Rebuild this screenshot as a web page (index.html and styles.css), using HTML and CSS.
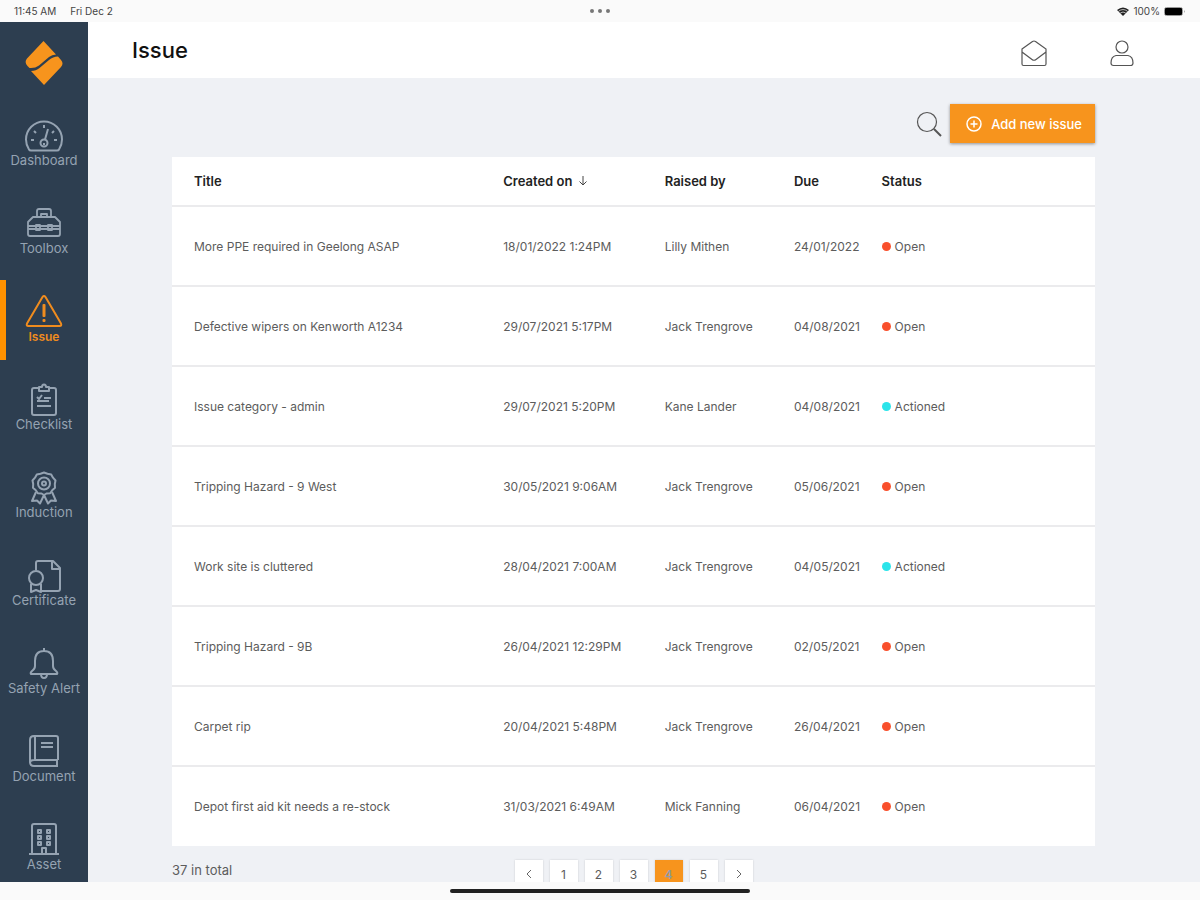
FILE: index.html
```html
<!DOCTYPE html>
<html lang="en">
<head>
  <meta charset="UTF-8" />
  <meta name="viewport" content="width=device-width, initial-scale=1.0"/>
  <title>Issue</title>
  <link rel="stylesheet" href="styles.css">
</head>
<body>

<div class="status-bar">
  <div class="status-left">
    <span>11:45 AM</span>
    <span>Fri Dec 2</span>
  </div>
  <div class="status-dots"><i></i><i></i><i></i></div>
  <div class="status-right">
    <svg width="12" height="9" viewBox="0 0 12 9"><path d="M6 9L0 3Q6-2 12 3Z" fill="#222"/><path d="M1.5 4.3Q6 .8 10.500 4.300M3.300 6Q6 4 8.700 6" fill="none" stroke="#fafafa" stroke-width=".7"/></svg>
    <span>100%</span>
    <svg width="22" height="9" viewBox="0 0 22 9"><rect x=".5" y=".5" width="18" height="8" rx="2" fill="none" stroke="#999"/><rect x="1" y="1" width="17" height="7" rx="1" fill="#000"/><path d="M20 3v3q1.500-1.500 0-3z" fill="#888"/></svg>
  </div>
</div>

<div class="app">
  <aside class="sidebar">
    <a class="logo" href="#" aria-label="Home">
      <svg width="38" height="44" viewBox="0 0 38 44" fill="#f7941d">
        <path d="M18.500 0L31 13.500Q27 13.500 24 16L14 24.500Q10 27.500 4.500 27L2.500 25Q-1 21.500 2 17.500Z"/>
        <path d="M33 15.500L36 19Q39 22.500 36 26L19 44L6 30Q11 30 14.500 27L24 19Q28 15.500 33 15.500Z"/>
      </svg>
    </a>
    <nav>
      <ul class="menu">
        <li><a href="#">
          <svg viewBox="0 0 40 34"><path d="M5 30.500Q2 26 2 20.500a18 18 0 0 1 36 0Q38 26 35 30.500Q34.500 31.500 33 31.500H7Q5.500 31.500 5 30.500Z"/><circle cx="20" cy="24" r="3.500"/><path d="M21 20.500L24 10M20 6v3M7 21h3M30 21h3M10 12l2 2M30 12l-2 2M20 24v2"/></svg>
          <span>Dashboard</span>
        </a></li>
        <li><a href="#">
          <svg viewBox="0 0 40 34"><path d="M13 10V4q0-2 2-2h10q2 0 2 2v6M17 10V7h6v3M9 10h22l5 5v12q0 2-2 2H6q-2 0-2-2V15ZM4 19h32M4 22h32M12 18h4v5h-4zM24 18h4v5h-4z" stroke-width="1.800"/></svg>
          <span>Toolbox</span>
        </a></li>
        <li class="active"><a href="#">
          <svg viewBox="0 0 40 34"><path d="M18.500 2Q20 0 21.500 2L37 28.500Q38 31 35.500 31h-31Q2 31 3 28.500Z"/><path d="M19.500 10h1v11h-1zM19.500 25h1v1h-1z"/></svg>
          <span>Issue</span>
        </a></li>
        <li><a href="#">
          <svg viewBox="0 0 40 34"><path d="M15 5H10q-2 0-2 2v23q0 2 2 2h20q2 0 2-2V7q0-2-2-2h-5"/><path d="M15 8V4h3q0-2.500 2-2.500T22 4h3v4zM13 14l2 2 3-4M20 15h7M13 18h12M13 23h14"/></svg>
          <span>Checklist</span>
        </a></li>
        <li><a href="#">
          <svg viewBox="0 0 40 34"><path d="M20 1.500l3.500 1.200 3.700.8 1.800 3.200 2.500 2.800-.7 3.500.2 3.700-2.800 2.500-2 3-3.700.3-2.500 1.500-2.500-1.500-3.700-.3-2-3-2.800-2.500.2-3.700-.7-3.500 2.500-2.800 1.800-3.200 3.700-.8z"/><circle cx="20" cy="12.500" r="6"/><circle cx="20" cy="12.500" r="2"/><path d="M12 21L8 30l5-.5 3 3 4-8.500 4 8.500 3-3 5 .5-4-9"/></svg>
          <span>Induction</span>
        </a></li>
        <li><a href="#">
          <svg viewBox="0 0 40 34"><path d="M12 11V4q0-2 2-2h15l7 7v21q0 2-2 2H17M28 2v8h8"/><circle cx="12" cy="19" r="7"/><path d="M7 25v8l5-2 5 2v-8"/></svg>
          <span>Certificate</span>
        </a></li>
        <li><a href="#">
          <svg viewBox="0 0 40 34"><path d="M20 1v3M20 4q-9 0-9 10v5q0 3-3 5-2 2-1 3h26q1-1-1-3-3-2-3-5v-5q0-10-9-10ZM17 27q0 4 3 4t3-4"/></svg>
          <span>Safety Alert</span>
        </a></li>
        <li><a href="#">
          <svg viewBox="0 0 40 34"><path d="M34 25V3q0-2-2-2H10Q6 1 6 5v22q0 4 4 4h24M34 25H10q-4 0-4 3M33 25v6M11 1v24M17 8h12M17 12h12"/></svg>
          <span>Document</span>
        </a></li>
        <li><a href="#">
          <svg viewBox="0 0 40 34"><path d="M5 31h30M8 31V3q0-2 2-2h20q2 0 2 2v28"/><path d="M14 7h3v3h-3zM23 7h3v3h-3zM14 13h3v3h-3zM23 13h3v3h-3zM14 19h3v3h-3zM23 19h3v3h-3zM18 31v-6h4v6"/></svg>
          <span>Asset</span>
        </a></li>
      </ul>
    </nav>
  </aside>

  <div class="page">
    <header class="topbar">
      <h1>Issue</h1>
      <div class="topbar-icons">
        <button class="icon-btn" aria-label="Messages">
          <svg width="28" height="28" viewBox="0 0 28 28"><path d="M2 10L12.500 2.500Q14 1.500 15.500 2.500L26 10v15q0 1.500-1.500 1.500h-21Q2 26.500 2 25ZM2 13l10 7.500q2 1.500 4 0L26 13"/></svg>
        </button>
        <button class="icon-btn" aria-label="Profile">
          <svg width="28" height="28" viewBox="0 0 28 28"><circle cx="14" cy="8" r="6"/><path d="M8 16.500h12q5 1 5 7.500 0 2.500-2.500 2.500h-17Q3 26.500 3 24q0-6.500 5-7.500Z"/></svg>
        </button>
      </div>
    </header>

    <main class="content">
      <div class="toolbar">
        <button class="icon-btn" aria-label="Search">
          <svg width="26" height="26" viewBox="0 0 26 26"><circle cx="11" cy="11" r="9.500"/><path d="M18 18l7 7" stroke-width="2"/></svg>
        </button>
        <button class="add-btn">
          <svg width="16" height="16" viewBox="0 0 16 16"><circle cx="8" cy="8" r="7"/><path d="M8 4.500v7M4.500 8h7"/></svg>
          Add new issue
        </button>
      </div>

      <table class="issues">
        <thead>
          <tr>
            <th class="col-title">Title</th>
            <th class="col-created">Created on <svg width="10" height="10" viewBox="0 0 10 10"><path d="M5 0v9M1.500 5.500L5 9l3.500-3.500"/></svg></th>
            <th class="col-raised">Raised by</th>
            <th class="col-due">Due</th>
            <th>Status</th>
          </tr>
        </thead>
        <tbody>
          <tr><td>More PPE required in Geelong ASAP</td><td>18/01/2022 1:24PM</td><td>Lilly Mithen</td><td>24/01/2022</td><td><span class="status open">Open</span></td></tr>
          <tr><td>Defective wipers on Kenworth A1234</td><td>29/07/2021 5:17PM</td><td>Jack Trengrove</td><td>04/08/2021</td><td><span class="status open">Open</span></td></tr>
          <tr><td>Issue category - admin</td><td>29/07/2021 5:20PM</td><td>Kane Lander</td><td>04/08/2021</td><td><span class="status actioned">Actioned</span></td></tr>
          <tr><td>Tripping Hazard - 9 West</td><td>30/05/2021 9:06AM</td><td>Jack Trengrove</td><td>05/06/2021</td><td><span class="status open">Open</span></td></tr>
          <tr><td>Work site is cluttered</td><td>28/04/2021 7:00AM</td><td>Jack Trengrove</td><td>04/05/2021</td><td><span class="status actioned">Actioned</span></td></tr>
          <tr><td>Tripping Hazard - 9B</td><td>26/04/2021 12:29PM</td><td>Jack Trengrove</td><td>02/05/2021</td><td><span class="status open">Open</span></td></tr>
          <tr><td>Carpet rip</td><td>20/04/2021 5:48PM</td><td>Jack Trengrove</td><td>26/04/2021</td><td><span class="status open">Open</span></td></tr>
          <tr><td>Depot first aid kit needs a re-stock</td><td>31/03/2021 6:49AM</td><td>Mick Fanning</td><td>06/04/2021</td><td><span class="status open">Open</span></td></tr>
        </tbody>
      </table>

      <div class="table-footer">
        <span class="total">37 in total</span>
        <nav class="pagination" aria-label="Pages">
          <a href="#" aria-label="Previous"><svg width="8" height="10" viewBox="0 0 8 10"><path d="M6 1L2 5l4 4"/></svg></a>
          <a href="#">1</a>
          <a href="#">2</a>
          <a href="#">3</a>
          <a href="#" class="current">4</a>
          <a href="#">5</a>
          <a href="#" aria-label="Next"><svg width="8" height="10" viewBox="0 0 8 10"><path d="M2 1l4 4-4 4"/></svg></a>
        </nav>
      </div>
    </main>
  </div>
</div>

<footer class="home-bar"><div class="home-indicator"></div></footer>

</body>
</html>
```
FILE: styles.css
```css
* {
  box-sizing: border-box;
}

body {
  display: flex;
  flex-direction: column;
  height: 100vh;
  margin: 0;
  overflow: hidden;
  font-family: Inter, "Open Sans", sans-serif;
  font-size: 12px;
  color: #5c5c5c;
  background: #fafafa;
}

a {
  color: inherit;
  text-decoration: none;
}

button {
  border: 0;
  padding: 0;
  background: none;
  font: inherit;
  cursor: pointer;
}

svg {
  display: block;
}

/* device status bar */
.status-bar {
  display: grid;
  grid-template-columns: 1fr auto 1fr;
  align-items: center;
  flex: none;
  height: 22px;
  padding: 0 14px;
  font-size: 10px;
  color: #444;
}

.status-left {
  display: flex;
  gap: 14px;
}

.status-right {
  display: flex;
  justify-content: flex-end;
  align-items: center;
  gap: 4px;
}

.status-dots {
  display: flex;
  gap: 4px;
}

.status-dots i {
  width: 4px;
  height: 4px;
  border-radius: 50%;
  background: #777;
}

.app {
  display: flex;
  flex: 1;
  min-height: 0;
}

/* sidebar */
.sidebar {
  flex: none;
  width: 88px;
  overflow: hidden;
  background: #2d3e50;
  color: #95a3b2;
}

.logo {
  display: flex;
  justify-content: center;
  align-items: center;
  height: 82px;
}

.menu {
  display: flex;
  flex-direction: column;
  gap: 8px;
  margin: 0;
  padding: 0;
  list-style: none;
}

.menu a {
  display: flex;
  flex-direction: column;
  align-items: center;
  height: 80px;
  padding-top: 15px;
  border-left: 6px solid transparent;
  border-right: 6px solid transparent;
  font-size: 13px;
  line-height: 15px;
  white-space: nowrap;
}

.menu svg {
  flex: none;
  width: 40px;
  height: 34px;
  fill: none;
  stroke: currentColor;
  stroke-width: 2;
  stroke-linejoin: round;
}

.menu .active a {
  border-left-color: #ff9100;
  color: #f08c1e;
  font-size: 12px;
  font-weight: 600;
}

/* page */
.page {
  display: flex;
  flex-direction: column;
  flex: 1;
  min-width: 0;
  overflow: hidden;
  background: #eff1f5;
}

.topbar {
  display: flex;
  justify-content: space-between;
  align-items: center;
  flex: none;
  height: 56px;
  padding: 0 64px 0 44px;
  background: #fff;
}

.topbar h1 {
  margin: 0;
  font-size: 22px;
  font-weight: 500;
  color: #111;
}

.topbar-icons {
  display: flex;
  gap: 60px;
  padding-top: 6px;
}

.icon-btn svg {
  fill: none;
  stroke: #555;
  stroke-width: 1.2;
}

.content {
  flex: 1;
  padding: 26px 105px 0 84px;
}

.toolbar {
  display: flex;
  justify-content: flex-end;
  align-items: center;
  gap: 8px;
  margin-bottom: 14px;
}

.add-btn {
  display: flex;
  align-items: center;
  gap: 9px;
  height: 39px;
  padding: 0 13px 0 16px;
  background: #f7941d;
  color: #fff;
  font-size: 13px;
  font-weight: 500;
  box-shadow: 0 1px 3px rgba(0, 0, 0, 0.4);
}

.add-btn svg {
  fill: none;
  stroke: #fff;
  stroke-width: 1.5;
}

/* issues table */
.issues {
  width: 100%;
  table-layout: fixed;
  border-spacing: 0;
  background: #fff;
}

.issues th,
.issues td {
  height: 80px;
  padding: 0 0 0 22px;
  border-bottom: 2px solid #ebebed;
  text-align: left;
  white-space: nowrap;
}

.issues th {
  height: 50px;
  font-size: 13px;
  font-weight: 600;
  color: #222;
}

.issues th svg {
  display: inline;
  margin-left: 2px;
  fill: none;
  stroke: #444;
}

.issues tr:last-child td {
  height: 79px;
  border-bottom: 0;
}

.col-title {
  width: 33.5%;
}

.col-created {
  width: 17.5%;
}

.col-raised {
  width: 14%;
}

.col-due {
  width: 9.5%;
}

.status {
  display: flex;
  align-items: center;
  gap: 4px;
}

.status::before {
  content: "";
  width: 9px;
  height: 9px;
  border-radius: 50%;
}

.open::before {
  background: #f9502d;
}

.actioned::before {
  background: #2be4ea;
}

.table-footer {
  display: grid;
  grid-template-columns: 1fr auto 1fr;
  margin-top: 14px;
}

.total {
  font-size: 13px;
  line-height: 20px;
}

.pagination {
  display: flex;
  gap: 7px;
}

.pagination a {
  display: flex;
  justify-content: center;
  align-items: center;
  width: 28px;
  height: 28px;
  background: #fff;
  box-shadow: 0 0 2px rgba(0, 0, 0, 0.15);
}

.pagination svg {
  fill: none;
  stroke: #666;
}

.pagination .current {
  background: #f7941d;
  color: #8f9cab;
  font-weight: 600;
}

.home-bar {
  display: flex;
  justify-content: center;
  align-items: center;
  flex: none;
  height: 18px;
}

.home-indicator {
  width: 25%;
  height: 4px;
  border-radius: 2px;
  background: #222;
}
```
